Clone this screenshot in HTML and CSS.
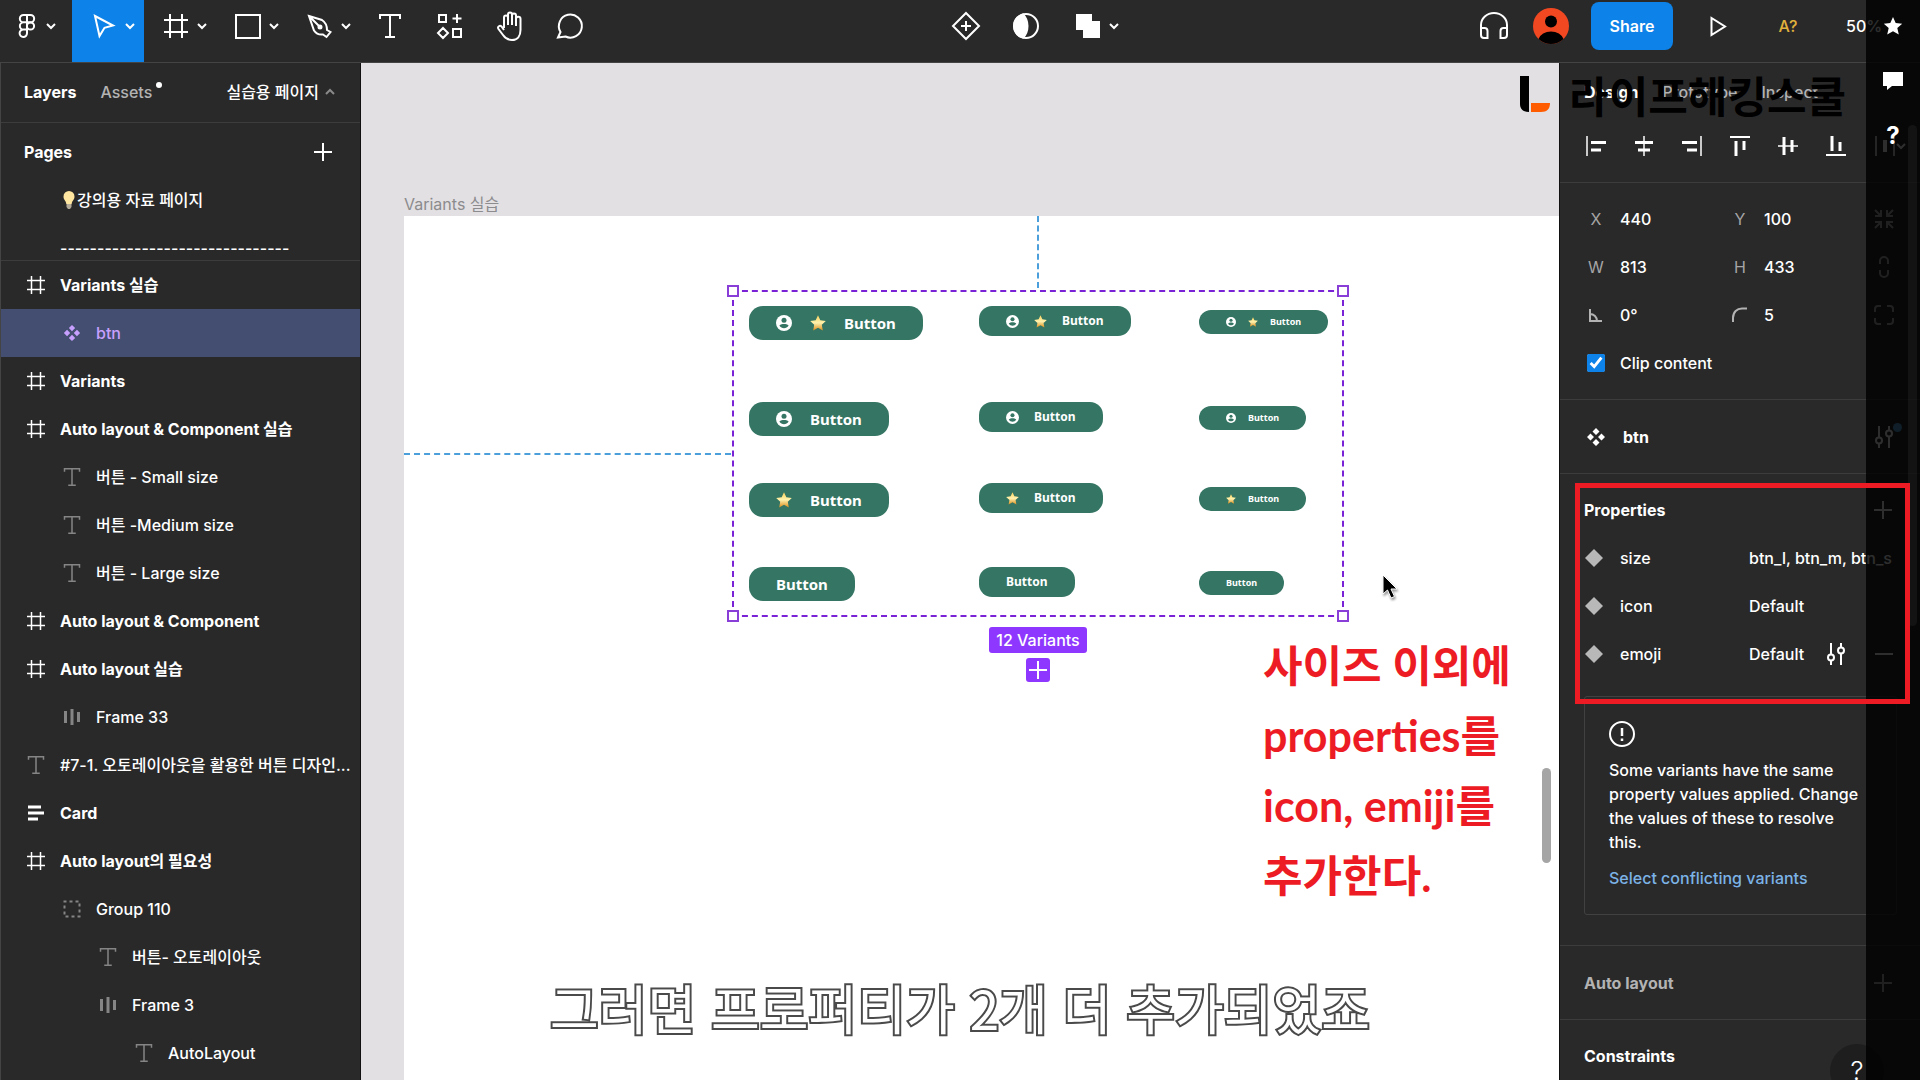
FILE: index.html
```html
<!DOCTYPE html>
<html lang="ko">
<head>
    <meta charset="utf-8">
    <title>Variants 실습</title>
    <link rel="stylesheet" href="styles.css">
</head>
<body>
    <!-- 공용 아이콘 -->
    <svg class="defs" width="0" height="0">
        <symbol id="i-chevron" viewBox="0 0 12 12"><path d="M2 4l4 4 4-4"/></symbol>
        <symbol id="i-frame" viewBox="0 0 24 24"><path d="M6 0v24M18 0v24M0 6h24M0 18h24"/></symbol>
        <symbol id="i-text" viewBox="0 0 24 24"><path d="M2 5V1h20v4M12 1v22M7 23h10"/></symbol>
        <symbol id="i-bars" viewBox="0 0 18 18"><path d="M2.500 3v12M9 1v16M15.500 4v10" stroke-width="3"/></symbol>
        <symbol id="i-component" viewBox="0 0 20 20"><path d="M10 1l3.500 3.500L10 8 6.500 4.500zM10 12l3.500 3.500L10 19l-3.500-3.500zM4.500 6.500L8 10l-3.500 3.500L1 10zM15.500 6.500L19 10l-3.500 3.500L12 10z" fill="currentColor" stroke="none"/></symbol>
        <symbol id="i-plus" viewBox="0 0 18 18"><path d="M9 0v18M0 9h18"/></symbol>
        <symbol id="i-diamond" viewBox="0 0 18 18"><path d="M9 0l9 9-9 9-9-9z" fill="currentColor" stroke="none"/></symbol>
        <symbol id="i-sliders" viewBox="0 0 20 22"><path d="M5 0v11M5 18v4M15 0v4M15 11v11"/><circle cx="5" cy="14.500" r="3"/><circle cx="15" cy="7.500" r="3"/></symbol>
        <symbol id="i-user" viewBox="0 0 16 16"><circle cx="8" cy="8" r="8" fill="#fff"/><circle cx="8" cy="5.200" r="2.500" fill="#347563"/><path d="M3.400 10.600C4.500 9.200 6.500 8.900 8 8.900s3.500.3 4.600 1.700C11.500 12.600 9.800 13.300 8 13.300s-3.500-.7-4.600-2.700z" fill="#347563"/></symbol>
        <symbol id="i-star" viewBox="0 0 16 16"><path d="M8 .3l2.300 5 5.500.7-4 3.800 1 5.600L8 12.700l-4.800 2.700 1-5.600-4-3.800 5.500-.7z" fill="url(#gold)"/></symbol>
        <linearGradient id="gold" x1="0" y1="0" x2="0" y2="1">
            <stop offset="0" stop-color="#f7cf58"/>
            <stop offset=".5" stop-color="#fff2ae"/>
            <stop offset="1" stop-color="#dc8d1c"/>
        </linearGradient>
    </svg>

    <div class="app">
        <header class="toolbar">
            <div class="tools">
                <button class="tool menu first" aria-label="Main menu">
                    <svg class="icon" viewBox="0 0 24 24"><path d="M12 1H8.500a3.600 3.600 0 0 0 0 7.300H12zM12 1h3.500a3.600 3.600 0 0 1 0 7.300H12zM12 8.300H8.500a3.600 3.600 0 0 0 0 7.300H12zM12 15.600H8.500a3.700 3.700 0 1 0 3.500 3.700z"/><circle cx="15.500" cy="12" r="3.600"/></svg>
                    <svg class="chevron"><use href="#i-chevron"/></svg>
                </button>
                <button class="tool menu active" aria-label="Move">
                    <svg class="icon" viewBox="0 0 24 24"><path d="M3 2l18 9.500-8.500 2.300L7.500 22z"/></svg>
                    <svg class="chevron"><use href="#i-chevron"/></svg>
                </button>
                <button class="tool menu" aria-label="Frame">
                    <svg class="icon"><use href="#i-frame"/></svg>
                    <svg class="chevron"><use href="#i-chevron"/></svg>
                </button>
                <button class="tool menu" aria-label="Rectangle">
                    <svg class="icon" viewBox="0 0 24 24"><path d="M0 1h24v23H0z"/></svg>
                    <svg class="chevron"><use href="#i-chevron"/></svg>
                </button>
                <button class="tool menu" aria-label="Pen">
                    <svg class="icon" viewBox="0 0 24 24"><path d="M1 2l13 4c3 2 5 6 5 10l3.500 2-4 5-3.500-2.500c-4 .5-7-1-9-4zM1 2l10 10"/><circle cx="12" cy="13" r="1.500" fill="currentColor"/></svg>
                    <svg class="chevron"><use href="#i-chevron"/></svg>
                </button>
                <button class="tool" aria-label="Text"><svg class="icon"><use href="#i-text"/></svg></button>
                <button class="tool" aria-label="Resources">
                    <svg class="icon" viewBox="0 0 24 24"><path d="M1 1h7v7H1zM15 15h8v8h-8zM19 0v9M14.500 4.500h9M5 14l5 5-5 5-5-5z"/></svg>
                </button>
                <button class="tool" aria-label="Hand">
                    <svg class="icon large" viewBox="0 0 28 30"><path d="M8 17V6.500a2 2 0 0 1 4 0V14M12 13V3.500a2 2 0 0 1 4 0V14M16 13V4.500a2 2 0 0 1 4 0V15M20 14V8a2 2 0 0 1 4.500 0v11c0 6-3 10-8.500 10-5 0-7-2-9-5l-4.500-6c-1.500-2.500 1.500-4 3-2.500L8 19"/></svg>
                </button>
                <button class="tool" aria-label="Comment">
                    <svg class="icon large" viewBox="0 0 28 30"><path d="M2 26.500l2.500-5.500a11.500 11.500 0 1 1 5 4.500z"/></svg>
                </button>
            </div>

            <div class="tools">
                <button class="tool" aria-label="Create component">
                    <svg class="icon large" viewBox="0 0 28 30"><path d="M14 2l13 13-13 13L1 15zM14 10v10M9 15h10"/></svg>
                </button>
                <button class="tool" aria-label="Mask">
                    <svg class="icon large" viewBox="0 0 28 30"><circle cx="14" cy="15" r="12"/><path d="M11 3.400a12 12 0 0 0 0 23.200c6-6 6-17.200 0-23.200z" fill="currentColor"/></svg>
                </button>
                <button class="tool menu" aria-label="Union selection">
                    <svg class="icon" viewBox="0 0 24 24"><path d="M0 0h16v7h8v17H7v-8H0z" fill="currentColor" stroke="none"/></svg>
                    <svg class="chevron"><use href="#i-chevron"/></svg>
                </button>
            </div>

            <div class="tools">
                <button class="tool" aria-label="Audio">
                    <svg class="icon large" viewBox="0 0 28 30"><path d="M1 19v-5a13 12 0 0 1 26 0v5M1 17h3.500a3 3 0 0 1 3 3v7H4a3 3 0 0 1-3-3zM27 17h-3.500a3 3 0 0 0-3 3v7H24a3 3 0 0 0 3-3z"/></svg>
                </button>
                <svg class="avatar" viewBox="0 0 36 36"><circle cx="18" cy="18" r="18" fill="#f24822"/><circle cx="18" cy="13.500" r="6"/><path d="M5.500 31a13 10.500 0 0 1 25 0A18 18 0 0 1 5.500 31z"/></svg>
                <button class="share">Share</button>
                <button class="tool play" aria-label="Present">
                    <svg class="icon" viewBox="0 0 24 24"><path d="M5.500 4v17L19 12.500z"/></svg>
                </button>
                <button class="tool missing">A?</button>
                <button class="tool zoom">50%</button>
            </div>
        </header>

        <aside class="left-panel">
            <div class="left-tabs">
                <button class="tab current">Layers</button>
                <button class="tab assets">Assets</button>
                <button class="page-name">실습용 페이지 <svg class="chevron up"><use href="#i-chevron"/></svg></button>
            </div>
            <section class="pages">
                <div class="pages-title">
                    <h2>Pages</h2>
                    <button class="plain" aria-label="Add page"><svg class="plus"><use href="#i-plus"/></svg></button>
                </div>
                <ul>
                    <li><svg class="bulb" viewBox="0 0 14 18"><path d="M7 0a5.500 5.500 0 0 1 5.500 5.500C12.500 9 10 9.500 9.700 13H4.300C4 9.500 1.500 9 1.500 5.500A5.500 5.500 0 0 1 7 0z" fill="#ffe6a0"/><path d="M4.500 13h5v3l-1.500 2H6l-1.500-2z" fill="#b4aa98"/></svg>강의용 자료 페이지</li>
                    <li>-------------------------------</li>
                </ul>
            </section>
            <ul class="layers">
                <li class="layer top"><svg><use href="#i-frame"/></svg><span>Variants 실습</span></li>
                <li class="layer sub selected"><svg><use href="#i-component"/></svg><span>btn</span></li>
                <li class="layer top"><svg><use href="#i-frame"/></svg><span>Variants</span></li>
                <li class="layer top"><svg><use href="#i-frame"/></svg><span>Auto layout &amp; Component 실습</span></li>
                <li class="layer sub"><svg><use href="#i-text"/></svg><span>버튼 - Small size</span></li>
                <li class="layer sub"><svg><use href="#i-text"/></svg><span>버튼 -Medium size</span></li>
                <li class="layer sub"><svg><use href="#i-text"/></svg><span>버튼 - Large size</span></li>
                <li class="layer top"><svg><use href="#i-frame"/></svg><span>Auto layout &amp; Component</span></li>
                <li class="layer top"><svg><use href="#i-frame"/></svg><span>Auto layout 실습</span></li>
                <li class="layer sub"><svg><use href="#i-bars"/></svg><span>Frame 33</span></li>
                <li class="layer"><svg><use href="#i-text"/></svg><span>#7-1. 오토레이아웃을 활용한 버튼 디자인...</span></li>
                <li class="layer top"><svg viewBox="0 0 18 18"><path d="M1 3h13M1 9h16M1 15h10" stroke-width="3"/></svg><span>Card</span></li>
                <li class="layer top"><svg><use href="#i-frame"/></svg><span>Auto layout의 필요성</span></li>
                <li class="layer sub"><svg viewBox="0 0 18 18"><path d="M1.500 1.500h15v15h-15z" stroke-dasharray="3 3" stroke-dashoffset="1"/></svg><span>Group 110</span></li>
                <li class="layer sub2"><svg><use href="#i-text"/></svg><span>버튼- 오토레이아웃</span></li>
                <li class="layer sub2"><svg><use href="#i-bars"/></svg><span>Frame 3</span></li>
                <li class="layer sub3"><svg><use href="#i-text"/></svg><span>AutoLayout</span></li>
            </ul>
        </aside>

        <main class="canvas">
            <div class="frame-name">Variants 실습</div>
            <div class="board">
                <div class="guide-v"></div>
                <div class="guide-h"></div>
                <div class="variants">
                    <i class="handle tl"></i><i class="handle tr"></i><i class="handle bl"></i><i class="handle br"></i>
                    <button class="btn btn-l"><svg><use href="#i-user"/></svg><svg><use href="#i-star"/></svg>Button</button>
                    <button class="btn btn-m"><svg><use href="#i-user"/></svg><svg><use href="#i-star"/></svg>Button</button>
                    <button class="btn btn-s"><svg><use href="#i-user"/></svg><svg><use href="#i-star"/></svg>Button</button>
                    <button class="btn btn-l"><svg><use href="#i-user"/></svg>Button</button>
                    <button class="btn btn-m"><svg><use href="#i-user"/></svg>Button</button>
                    <button class="btn btn-s"><svg><use href="#i-user"/></svg>Button</button>
                    <button class="btn btn-l"><svg><use href="#i-star"/></svg>Button</button>
                    <button class="btn btn-m"><svg><use href="#i-star"/></svg>Button</button>
                    <button class="btn btn-s"><svg><use href="#i-star"/></svg>Button</button>
                    <button class="btn btn-l">Button</button>
                    <button class="btn btn-m">Button</button>
                    <button class="btn btn-s">Button</button>
                    <div class="variant-info">
                        <span class="count">12 Variants</span>
                        <button class="add" aria-label="Add variant"><svg class="plus"><use href="#i-plus"/></svg></button>
                    </div>
                </div>
                <svg class="cursor" viewBox="0 0 16 26"><path d="M1 1v19l4.500-4 3.500 8 3.500-1.500L9 15h6z" fill="#000" stroke="#fff" stroke-width="1"/></svg>
                <p class="note">사이즈 이외에<br>properties를<br>icon, emiji를<br>추가한다.</p>
                <div class="canvas-scroll"></div>
            </div>
        </main>

        <aside class="right-panel">
            <section class="head">
                <div class="right-tabs">
                    <button class="tab current">Design</button>
                    <button class="tab">Prototype</button>
                    <button class="tab">Inspect</button>
                </div>
                <div class="align">
                    <button aria-label="Align left"><svg viewBox="0 0 20 20"><path d="M1 0v20" stroke-width="1.500"/><path d="M5 6.500h15M5 14h10" stroke-width="3"/></svg></button>
                    <button aria-label="Align center"><svg viewBox="0 0 20 20"><path d="M10 0v20" stroke-width="1.500"/><path d="M1 6.500h18M4 14h12" stroke-width="3"/></svg></button>
                    <button aria-label="Align right"><svg viewBox="0 0 20 20"><path d="M19 0v20" stroke-width="1.500"/><path d="M0 6.500h15M5 14h10" stroke-width="3"/></svg></button>
                    <button aria-label="Align top"><svg viewBox="0 0 20 20"><path d="M0 1h20" stroke-width="2"/><path d="M6 5v15M14 5v9" stroke-width="3"/></svg></button>
                    <button aria-label="Align middle"><svg viewBox="0 0 20 20"><path d="M0 10h20" stroke-width="1.500"/><path d="M6 1v18M14 4v12" stroke-width="3"/></svg></button>
                    <button aria-label="Align bottom"><svg viewBox="0 0 20 20"><path d="M0 19h20" stroke-width="2"/><path d="M6 0v15M14 6v9" stroke-width="3"/></svg></button>
                    <button class="more" aria-label="Distribute"><svg viewBox="0 0 20 20"><path d="M1 0v20M19 0v20" stroke-width="1.500"/><path d="M10 4v12" stroke-width="4"/></svg><svg class="chevron"><use href="#i-chevron"/></svg></button>
                </div>
            </section>

            <section class="transform">
                <label for="x">X</label><input type="text" id="x" value="440">
                <label for="y">Y</label><input type="text" id="y" value="100">
                <svg viewBox="0 0 20 20"><path d="M1 1l6 6M7 1v6H1M19 1l-6 6M13 1v6h6M1 19l6-6M1 13h6v6M19 19l-6-6M19 13h-6v6"/></svg>
                <label for="w">W</label><input type="text" id="w" value="813">
                <label for="h">H</label><input type="text" id="h" value="433">
                <svg viewBox="0 0 20 20"><path d="M6 7V4a4 4 0 0 1 8 0v3M6 13v3a4 4 0 0 0 8 0v-3"/></svg>
                <label for="angle" aria-label="Rotation"><svg viewBox="0 0 20 20"><path d="M4 4v12h12M4 9a7 7 0 0 1 7 7"/></svg></label><input type="text" id="angle" value="0°">
                <label for="radius" aria-label="Corner radius"><svg viewBox="0 0 20 20"><path d="M3 17v-4C3 7 7 3.500 12 3.500h5"/></svg></label><input type="text" id="radius" value="5">
                <svg viewBox="0 0 20 20"><path d="M1 7V4a3 3 0 0 1 3-3h3M13 1h3a3 3 0 0 1 3 3v3M19 13v3a3 3 0 0 1-3 3h-3M7 19H4a3 3 0 0 1-3-3v-3"/></svg>
                <input type="checkbox" id="clip" checked><label for="clip" class="clip">Clip content</label>
            </section>

            <section class="component">
                <svg class="comp-icon"><use href="#i-component"/></svg>
                <h2>btn</h2>
                <button class="plain dot" aria-label="Configure"><svg class="sliders"><use href="#i-sliders"/></svg></button>
            </section>

            <section class="properties">
                <div class="prop-title">
                    <h2>Properties</h2>
                    <button class="plain" aria-label="Add property"><svg class="plus"><use href="#i-plus"/></svg></button>
                </div>
                <div class="prop"><svg class="plus"><use href="#i-diamond"/></svg><span>size</span><span>btn_l, btn_m, btn_s</span></div>
                <div class="prop"><svg class="plus"><use href="#i-diamond"/></svg><span>icon</span><span>Default</span></div>
                <div class="prop">
                    <svg class="plus"><use href="#i-diamond"/></svg><span>emoji</span><span>Default</span>
                    <button class="plain edit" aria-label="Edit property"><svg class="sliders"><use href="#i-sliders"/></svg></button>
                    <button class="plain" aria-label="Remove property"><svg class="plus" viewBox="0 0 18 18"><path d="M0 9h18"/></svg></button>
                </div>
                <div class="warning">
                    <svg viewBox="0 0 26 26"><circle cx="13" cy="13" r="12"/><path d="M13 7v8M13 17.500v2.500" stroke-width="2.500"/></svg>
                    <p>Some variants have the same property values applied. Change the values of these to resolve this.</p>
                    <a href="#">Select conflicting variants</a>
                </div>
            </section>

            <section class="auto-layout">
                <h2>Auto layout</h2>
                <button class="plain" aria-label="Add auto layout"><svg class="plus"><use href="#i-plus"/></svg></button>
            </section>
            <section class="constraints"><h2>Constraints</h2></section>
            <button class="help">?</button>
        </aside>
    </div>

    <!-- 영상 오버레이 -->
    <div class="highlight-box"></div>
    <div class="side-bar">
        <svg viewBox="0 0 20 20"><path d="M10 1l2.700 6 6.500.7-4.900 4.300 1.500 6.500L10 15.200l-5.800 3.300L5.700 12 .8 7.700 7.300 7z" fill="#fff"/></svg>
        <svg viewBox="0 0 20 20"><path d="M0 2h20v14H9l-5 4v-4H0z" fill="#fff"/></svg>
        <b>?</b>
        <i class="panel-scroll"></i>
    </div>
    <div class="watermark">
        <svg viewBox="0 0 30 36"><path d="M0 0h9v36C3 36 0 33 0 28z"/><path d="M11 27h19c0 6-3 9-9 9H11z" fill="#ff5c00"/></svg>
        <span>라이프해킹스쿨</span>
    </div>
    <p class="subtitle">그러면 프로퍼티가 2개 더 추가되었죠</p>
</body>
</html>
```
FILE: styles.css
```css
* {
    box-sizing: border-box;
}

body {
    margin: 0;
    position: relative;
    height: 100vh;
    overflow: hidden;
    font-family: Inter, "Noto Sans CJK KR", sans-serif;
    font-size: 16px;
    font-weight: 500;
    line-height: 24px;
    color: #fff;
    background-color: #29292a;
}

h2, p, ul {
    margin: 0;
    padding: 0;
    font-size: 16px;
}

h2 {
    font-weight: 700;
}

ul {
    list-style: none;
}

svg {
    display: block;
    flex: none;
    fill: none;
    stroke: currentColor;
    stroke-width: 2;
    overflow: visible;
}

button, input {
    font: inherit;
    color: inherit;
    background: none;
    border: 0;
    padding: 0;
}

.defs {
    position: absolute;
}

.app {
    display: grid;
    grid-template-columns: 361px 1fr 361px;
    grid-template-rows: 63px 1fr;
    height: 100vh;
}

/* 상단 툴바 */
.toolbar {
    grid-column: 1 / -1;
    display: flex;
    justify-content: space-between;
    border-bottom: 1px solid #444;
}

.tools {
    display: flex;
}

.tool {
    width: 60px;
    height: 62px;
    padding-bottom: 10px;
    display: flex;
    align-items: center;
    justify-content: center;
}

.tool.menu {
    width: 72px;
    justify-content: flex-start;
    padding-left: 20px;
    gap: 8px;
}

.tool.first {
    padding-left: 15px;
    gap: 6px;
}

.tool.active {
    background-color: #0d82e8;
}

.icon {
    width: 24px;
    height: 24px;
}

.icon.large {
    width: 28px;
    height: 30px;
}

.chevron {
    width: 12px;
    height: 12px;
}

.avatar {
    width: 36px;
    height: 36px;
    margin: 8px 22px 0 9px;
    stroke: none;
    fill: #000;
}

.share {
    width: 82px;
    height: 48px;
    margin: 2px 13px 0 0;
    border-radius: 8px;
    background-color: #0d82e8;
    font-weight: 600;
}

.tool.play {
    width: 64px;
}

.tool.missing {
    width: 76px;
    color: #e0b13c;
}

.tool.zoom {
    width: 94px;
    padding-left: 20px;
    justify-content: flex-start;
}

/* 왼쪽 패널 */
.left-panel {
    overflow: hidden;
    border-left: 1px solid #444;
    border-right: 1px solid #111;
}

.left-tabs {
    display: flex;
    align-items: center;
    height: 60px;
    padding: 0 24px 2px 23px;
    border-bottom: 1px solid #3c3c3c;
}

.tab {
    color: #b3b3b3;
    font-weight: 500;
}

.tab.current {
    color: #fff;
    font-weight: 700;
}

.assets {
    position: relative;
    margin-left: 24px;
}

.assets::after {
    content: "";
    position: absolute;
    top: 2px;
    right: -10px;
    width: 6px;
    height: 6px;
    border-radius: 50%;
    background-color: #fff;
}

.page-name {
    display: flex;
    align-items: center;
    gap: 5px;
    margin-left: auto;
    font-weight: 500;
}

.chevron.up {
    transform: rotate(180deg);
    color: #8a8a8a;
}

.pages {
    height: 138px;
    padding-top: 5px;
    overflow: hidden;
    border-bottom: 1px solid #3c3c3c;
}

.pages-title {
    display: flex;
    align-items: center;
    justify-content: space-between;
    height: 48px;
    padding: 0 28px 0 23px;
}

.plain {
    display: flex;
    align-items: center;
    justify-content: center;
}

.plus {
    width: 18px;
    height: 18px;
}

.pages li {
    display: flex;
    align-items: center;
    height: 48px;
    padding-left: 59px;
}

.bulb {
    width: 14px;
    height: 18px;
    margin: 0 1px 0 2px;
    stroke: none;
}

.layer {
    display: flex;
    align-items: center;
    gap: 15px;
    height: 48px;
    padding: 0 0 0 26px;
}

.layer svg {
    width: 18px;
    height: 18px;
    color: #858585;
}

.layer span {
    white-space: nowrap;
}

.layer.top {
    font-weight: 700;
}

.layer.top svg {
    color: #fff;
}

.layer.sub {
    padding-left: 62px;
}

.layer.sub2 {
    padding-left: 98px;
}

.layer.sub3 {
    padding-left: 134px;
}

.layer.selected,
.layer.selected svg {
    color: #c7a0ff;
}

.layer.selected {
    background-color: #444e70;
}

/* 캔버스 */
.canvas {
    display: flex;
    flex-direction: column;
    padding-left: 43px;
    background-color: #e2e0e3;
    overflow: hidden;
}

.frame-name {
    padding: 129px 0 0;
    color: #8c8b8d;
    font-weight: 400;
}

.board {
    position: relative;
    flex: 1;
    background-color: #fff;
}

.variants {
    position: absolute;
    top: 74px;
    left: 328px;
    width: 612px;
    height: 327px;
    display: grid;
    grid-template-columns: 230px 220px 1fr;
    grid-template-rows: 96px 81px 84px 1fr;
    justify-items: start;
    padding: 14px 0 0 15px;
    border: 2px dashed #7a22d6;
}

.handle {
    position: absolute;
    width: 12px;
    height: 12px;
    border: 2px solid #8a3ed8;
    background-color: #fff;
}

.tl { top: -7px; left: -7px; }
.tr { top: -7px; right: -7px; }
.bl { bottom: -7px; left: -7px; }
.br { bottom: -7px; right: -7px; }

.btn {
    display: flex;
    align-items: center;
    background-color: #347563;
    font-family: "Noto Sans", sans-serif;
    font-weight: 700;
}

.btn svg {
    stroke: none;
}

.btn-l {
    height: 34px;
    padding: 0 27px;
    gap: 18px;
    border-radius: 14px;
    font-size: 15px;
}

.btn-l svg {
    width: 16px;
    height: 16px;
}

.btn-m {
    height: 30px;
    padding: 0 27px;
    gap: 15px;
    border-radius: 13px;
    font-size: 12px;
}

.btn-m svg {
    width: 13px;
    height: 13px;
}

.btn-s {
    height: 24px;
    margin-top: 4px;
    padding: 0 27px;
    gap: 12px;
    border-radius: 12px;
    font-size: 9px;
}

.btn-s svg {
    width: 10px;
    height: 10px;
}

.variant-info {
    position: absolute;
    top: 335px;
    left: 0;
    right: 0;
    display: flex;
    flex-direction: column;
    align-items: center;
    gap: 5px;
}

.count,
.add {
    background-color: #8e38ff;
    border-radius: 3px;
}

.count {
    padding: 1px 7px;
}

.add {
    display: flex;
    align-items: center;
    justify-content: center;
    width: 24px;
    height: 24px;
}

.guide-v {
    position: absolute;
    top: 0;
    left: 633px;
    height: 72px;
    border-left: 2px dashed #4b9fda;
}

.guide-h {
    position: absolute;
    top: 237px;
    left: 0;
    width: 327px;
    border-top: 2px dashed #4b9fda;
}

.cursor {
    position: absolute;
    top: 358px;
    left: 978px;
    width: 16px;
    height: 26px;
    filter: drop-shadow(1px 2px 1px #999);
}

.note {
    position: absolute;
    top: 415px;
    left: 859px;
    color: #ed1c24;
    font-family: Lato, "Noto Sans CJK KR", sans-serif;
    font-size: 43px;
    font-weight: 700;
    line-height: 70px;
    white-space: nowrap;
}

.canvas-scroll {
    position: absolute;
    top: 552px;
    right: 8px;
    width: 9px;
    height: 95px;
    border-radius: 5px;
    background-color: #a5a5a6;
}

/* 오른쪽 패널 */
.right-panel {
    position: relative;
    overflow: hidden;
    border-left: 1px solid #111;
}

.right-panel section {
    border-bottom: 1px solid #3c3c3c;
}

.head {
    height: 120px;
}

.right-tabs {
    display: flex;
    gap: 24px;
    height: 58px;
    padding-left: 24px;
}

.align {
    display: flex;
    padding-left: 12px;
}

.align button {
    display: flex;
    align-items: center;
    justify-content: center;
    width: 48px;
    height: 50px;
}

.align svg {
    width: 20px;
    height: 20px;
}

.align .chevron {
    width: 12px;
    height: 12px;
}

.align .more {
    padding-left: 14px;
}

.transform {
    display: grid;
    grid-template-columns: 24px 96px 24px 96px 24px;
    grid-auto-rows: 48px;
    column-gap: 12px;
    align-items: center;
    padding: 12px 0 12px 24px;
}

.transform label {
    text-align: center;
    color: #a5a5a5;
    font-weight: 400;
}

.transform input {
    width: 100%;
}

.transform svg {
    width: 20px;
    height: 20px;
    margin: 0 auto;
    color: #b3b3b3;
}

.transform input[type="checkbox"] {
    width: 18px;
    height: 18px;
    margin: 0 3px;
    accent-color: #0d82e8;
}

.transform .clip {
    grid-column: 2 / 5;
    text-align: left;
    color: #fff;
    font-weight: 500;
}

.component {
    display: flex;
    align-items: center;
    height: 74px;
    padding: 0 26px;
}

.comp-icon {
    width: 20px;
    height: 20px;
    margin-right: 17px;
}

.dot {
    position: relative;
    margin-left: auto;
}

.dot::after {
    content: "";
    position: absolute;
    top: -3px;
    right: -8px;
    width: 9px;
    height: 9px;
    border-radius: 50%;
    background-color: #56a8dd;
}

.sliders {
    width: 20px;
    height: 22px;
}

.properties {
    padding: 12px 23px 30px 24px;
}

.prop-title {
    display: flex;
    align-items: center;
    justify-content: space-between;
    height: 48px;
    padding-right: 5px;
}

.prop {
    display: grid;
    grid-template-columns: 36px 129px 77px 1fr 18px;
    align-items: center;
    height: 48px;
    padding-right: 4px;
    white-space: nowrap;
}

.prop > svg {
    margin-left: 1px;
    color: #b8b8b8;
}

.edit {
    justify-self: start;
}

.warning {
    margin-top: 18px;
    padding: 24px 20px 24px 24px;
    border: 1px solid #414141;
    border-radius: 3px;
}

.warning svg {
    width: 26px;
    height: 26px;
    margin-bottom: 11px;
}

.warning p {
    max-width: 258px;
    margin-bottom: 12px;
}

.warning a {
    color: #7cb3e6;
    text-decoration: none;
}

.auto-layout {
    display: flex;
    align-items: center;
    justify-content: space-between;
    height: 74px;
    padding: 0 28px 0 24px;
    color: #b3b3b3;
}

.constraints {
    padding: 24px;
}

.help {
    position: absolute;
    right: 36px;
    bottom: -18px;
    width: 54px;
    height: 54px;
    border-radius: 50%;
    background-color: #1e1e1f;
    font-size: 26px;
    font-weight: 300;
}

/* 영상 위에 올라가는 요소들 */
.highlight-box {
    position: absolute;
    top: 483px;
    right: 10px;
    width: 335px;
    height: 221px;
    border: 5px solid #ed1c24;
    z-index: 2;
}

.side-bar {
    position: absolute;
    top: 0;
    right: 0;
    bottom: 0;
    width: 54px;
    padding-top: 16px;
    display: flex;
    flex-direction: column;
    align-items: center;
    gap: 34px;
    background-color: rgba(0, 0, 0, 0.82);
}

.side-bar svg {
    width: 20px;
    height: 20px;
    stroke: none;
}

.side-bar b {
    font-size: 24px;
}

.panel-scroll {
    position: absolute;
    top: 125px;
    right: 3px;
    width: 9px;
    height: 501px;
    border-radius: 5px;
    background-color: rgba(255, 255, 255, 0.05);
}

.watermark {
    position: absolute;
    top: 69px;
    right: 74px;
    display: flex;
    align-items: center;
    gap: 19px;
    color: #000;
    font-family: "Noto Sans CJK KR", sans-serif;
    font-size: 43px;
    font-weight: 700;
    line-height: 50px;
}

.watermark svg {
    width: 30px;
    height: 36px;
    fill: #000;
    stroke: none;
}

.subtitle {
    position: absolute;
    left: 0;
    right: 0;
    bottom: 39px;
    font-family: "Noto Sans CJK KR", sans-serif;
    font-size: 53px;
    font-weight: 400;
    line-height: 68px;
    text-align: center;
    color: #fff;
    -webkit-text-stroke: 4px #4a4a4a;
    paint-order: stroke fill;
}
```
